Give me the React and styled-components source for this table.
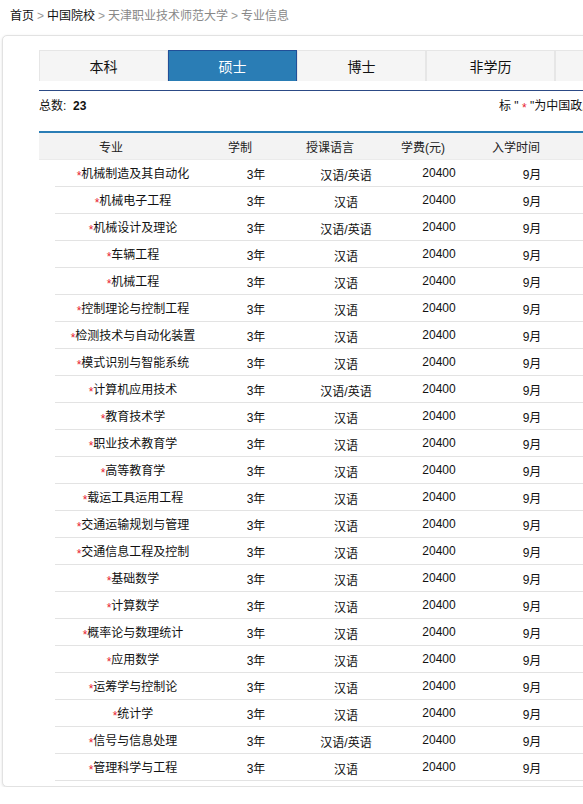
import React from "react"
import styled, { createGlobalStyle } from "styled-components"

const GlobalStyle = createGlobalStyle`
  html, body {
    margin: 0;
    padding: 0;
    overflow-x: hidden;
    background: #fff;
  }
  body {
    font-family: "Liberation Sans", Arial, "Noto Sans CJK SC", sans-serif;
    font-size: 12px;
    color: #222;
  }
`

const tabs = ["本科", "硕士", "博士", "非学历", "语言生"]

const majors = [
  ["机械制造及其自动化", "汉语/英语"],
  ["机械电子工程", "汉语"],
  ["机械设计及理论", "汉语/英语"],
  ["车辆工程", "汉语"],
  ["机械工程", "汉语"],
  ["控制理论与控制工程", "汉语"],
  ["检测技术与自动化装置", "汉语"],
  ["模式识别与智能系统", "汉语"],
  ["计算机应用技术", "汉语/英语"],
  ["教育技术学", "汉语"],
  ["职业技术教育学", "汉语"],
  ["高等教育学", "汉语"],
  ["载运工具运用工程", "汉语"],
  ["交通运输规划与管理", "汉语"],
  ["交通信息工程及控制", "汉语"],
  ["基础数学", "汉语"],
  ["计算数学", "汉语"],
  ["概率论与数理统计", "汉语"],
  ["应用数学", "汉语"],
  ["运筹学与控制论", "汉语"],
  ["统计学", "汉语"],
  ["信号与信息处理", "汉语/英语"],
  ["管理科学与工程", "汉语"],
]

const App = () => {
  return (
    <>
      <GlobalStyle />
      <Crumbs>
        <a>首页</a>
        <span className="sep">&gt;</span>
        <a>中国院校</a>
        <span className="sep">&gt;</span>
        <span className="muted">天津职业技术师范大学</span>
        <span className="sep">&gt;</span>
        <span className="muted">专业信息</span>
      </Crumbs>
      <Card>
        <TabBar>
          {tabs.map(t => (
            <Tab key={t} $active={t === "硕士"}>
              {t}
            </Tab>
          ))}
        </TabBar>
        <InfoRow>
          <div>
            总数:&nbsp; <b>23</b>
          </div>
          <div>
            标 &quot; <Star>*</Star> &quot;为中国政府奖学金专业
          </div>
        </InfoRow>
        <Table>
          <HeadRow>
            <span>专业</span>
            <span>学制</span>
            <span>授课语言</span>
            <span>学费(元)</span>
            <span>入学时间</span>
            <span />
          </HeadRow>
          {majors.map(([name, lang]) => (
            <BodyRow key={name}>
              <Cell $first>
                <Star>*</Star>
                {name}
              </Cell>
              <Cell>3年</Cell>
              <Cell $lang>{lang}</Cell>
              <Cell>20400</Cell>
              <Cell>9月</Cell>
              <Cell />
            </BodyRow>
          ))}
        </Table>
      </Card>
    </>
  )
}

const Crumbs = styled.div`
  height: 30px;
  line-height: 30px;
  padding-left: 10px;
  font-family: "Noto Sans CJK SC", sans-serif;
  font-size: 12px;
  color: #111;
  white-space: nowrap;

  .sep {
    color: #999;
    margin: 0 3px;
    font-family: "Liberation Sans", sans-serif;
  }

  .muted {
    color: #888;
  }
`

const Card = styled.div`
  width: 1000px;
  margin: 5px 0 0 2px;
  padding: 14px 0 5px 36px;
  border: 1px solid #e2e2e2;
  border-radius: 5px;
  box-shadow: 0 1px 3px rgba(0, 0, 0, 0.12);
  background: #fff;
`

const TabBar = styled.div`
  display: flex;
  height: 31px;
  margin-bottom: 9px;
`

const Tab = styled.div`
  box-sizing: border-box;
  width: 129px;
  height: 31px;
  display: flex;
  align-items: center;
  justify-content: center;
  font-family: "Noto Sans CJK SC", sans-serif;
  font-size: 14px;
  color: ${props => (props.$active ? "#fff" : "#111")};
  background: ${props => (props.$active ? "#2a7db5" : "#f5f5f5")};
  border: 1px solid ${props => (props.$active ? "#214f98" : "#e6e6e6")};
  border-bottom: none;
`

const InfoRow = styled.div`
  display: grid;
  grid-template-columns: 460px auto;
  height: 30px;
  line-height: 30px;
  border-top: 1px solid #2c4a86;
  margin-bottom: 10px;
  font-family: "Liberation Sans", "Noto Sans CJK SC", sans-serif;
  color: #111;
  white-space: nowrap;

  b {
    font-weight: bold;
  }
`

const Star = styled.span`
  color: #e8212e;
  font-family: "Liberation Sans", sans-serif;
  vertical-align: -2px;
`

const Table = styled.div`
  border-top: 2px solid #2a7db5;
`

const cols = "144px 114px 66px 120px 66px 1fr"

const HeadRow = styled.div`
  display: grid;
  grid-template-columns: ${cols};
  height: 26px;
  align-items: center;
  background: #f3f3f3;
  border-bottom: 1px solid #ebebeb;
  color: #222;

  span {
    text-align: center;
    white-space: nowrap;
  }
`

const BodyRow = styled.div`
  display: grid;
  grid-template-columns: ${cols};
  height: 26px;
  align-items: center;
  margin-left: 16px;
  border-bottom: 1px solid #e3e3e3;
  color: #111;
`

const Cell = styled.span`
  text-align: center;
  white-space: nowrap;
  padding-left: ${props => (props.$first ? "12px" : "0")};
  padding-top: ${props => (props.$lang ? "3px" : "0")};
`

export default App
